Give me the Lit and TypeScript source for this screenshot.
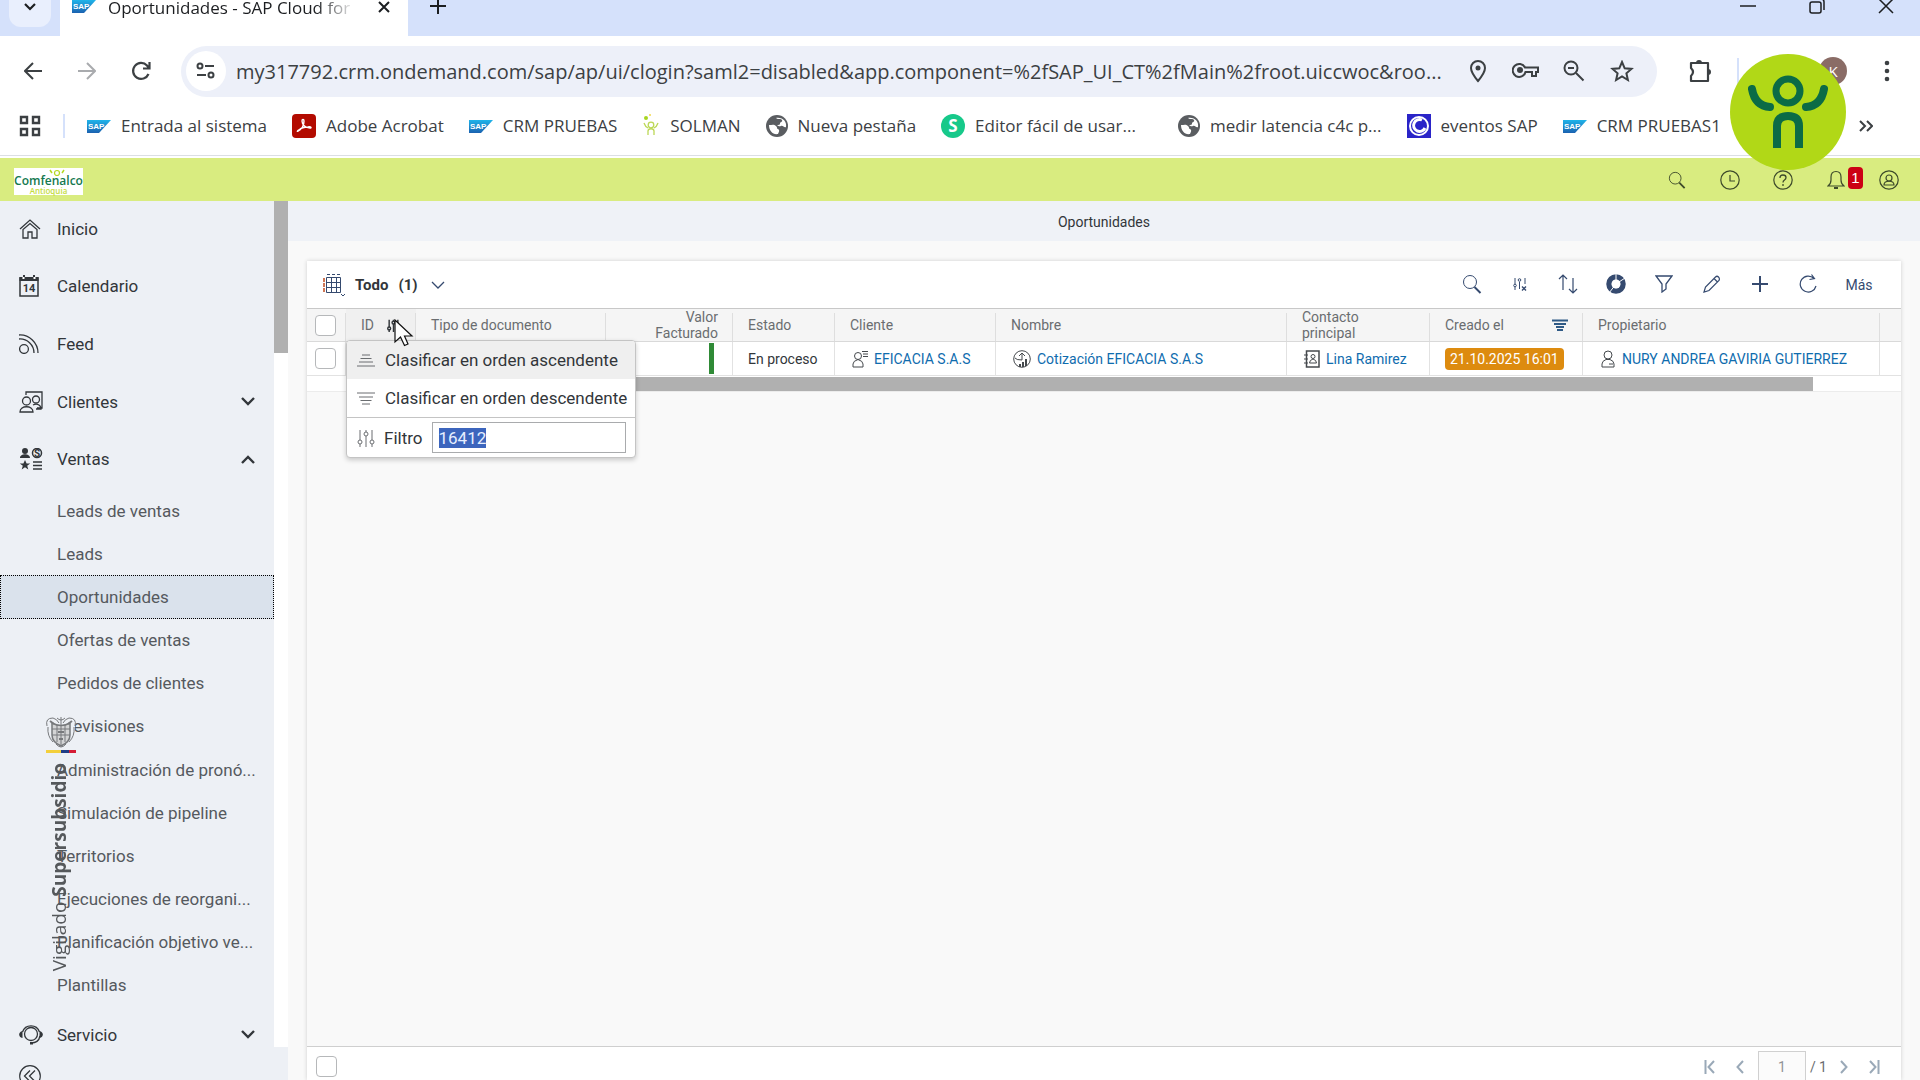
import { LitElement, html, css, svg, nothing } from "lit";
import { customElement } from "lit/decorators.js";
import { classMap } from "lit/directives/class-map.js";

const icon = (w: number, h: number, body: unknown, box = `0 0 ${w} ${h}`) =>
  html`<svg width=${w} height=${h} viewBox=${box} fill="none" stroke="currentColor" aria-hidden="true">${body}</svg>`;

const sapLogo = () =>
  icon(24, 13, svg`<defs><linearGradient id="sap" x1="0" y1="0" x2="0" y2="1"><stop offset="0" stop-color="#1fb4ea"/><stop offset="1" stop-color="#1b62b0"/></linearGradient></defs>
    <path d="M0 0H24L12 13H0Z" fill="url(#sap)" stroke="none"/>
    <text x="1" y="9" font-family="Liberation Sans" font-size="8" font-weight="700" fill="#fff" stroke="none">SAP</text>`);

const globe = () =>
  icon(22, 24, svg`<circle cx="11" cy="12" r="11" fill="#5a5d61" stroke="none"/>
    <path d="M3 11c3 0 5-1 7 1s0 2 2 3 1 3 0 5C7 21 3 17 3 11ZM10 4c2 2 5 0 6 2s-2 2-2 3 0 2-2 2 1 2 3 1 3 2 5 1c1-5-3-10-10-9Z" fill="#fff" stroke="none"/>`);

const bookmarkIcons = {
  sap: sapLogo,
  acrobat: () =>
    icon(24, 24, svg`<rect width="24" height="24" rx="4" fill="#b30b00" stroke="none"/>
      <path d="M6 17c4-2 6-6 6-10 0-2-2-2-2 0 0 4 4 7 8 7 2 0 1-2-2-1-4 0-7 1-9 3-2 1-2 2-1 1Z" stroke="#fff" stroke-width="1.4"/>`),
  solman: () =>
    icon(18, 24, svg`<g stroke="#bcd856" stroke-width="1.300"><circle cx="9" cy="11" r="2.800"/><path d="M2 9c1 3 2 4 4 5M16 9c-1 3-2 4-4 5M6 21v-4c0-3 6-3 6 0v4"/></g><circle cx="4" cy="4" r="2" fill="#a8d520" stroke="none"/><circle cx="8" cy="1" r="1" fill="#f3d84a" stroke="none"/>`),
  globe,
  editor: () =>
    icon(24, 24, svg`<circle cx="12" cy="12" r="12" fill="#17c98a" stroke="none"/>
      <text x="12" y="18" text-anchor="middle" font-family="Open Sans" font-size="17" font-weight="700" fill="#fff" stroke="none">S</text>`),
  eventos: () =>
    icon(24, 24, svg`<rect width="24" height="24" fill="#2a24c8" stroke="none"/>
      <circle cx="12" cy="12" r="9" stroke="#fff" stroke-width="2"/><path d="M15 6a6 6 0 1 0 3 8" stroke="#fff" stroke-width="3"/>`),
};

const bookmarks: { icon: keyof typeof bookmarkIcons; text: string; wide?: boolean }[] = [
  { icon: "sap", text: "Entrada al sistema" },
  { icon: "acrobat", text: "Adobe Acrobat" },
  { icon: "sap", text: "CRM PRUEBAS" },
  { icon: "solman", text: "SOLMAN" },
  { icon: "globe", text: "Nueva pestaña" },
  { icon: "editor", text: "Editor fácil de usar...", wide: true },
  { icon: "globe", text: "medir latencia c4c p..." },
  { icon: "eventos", text: "eventos SAP" },
  { icon: "sap", text: "CRM PRUEBAS1" },
];

const search = (s: number) =>
  icon(s, s, svg`<circle cx="8" cy="8" r="6.5"/><path d="M12.5 13l6 6" stroke-width="2"/>`, "0 0 20 20");

const sliders = (s: number, weight = 1) =>
  icon(s, s, svg`<g stroke-width=${weight}><path d="M3 1v10M3 15v3M9 1v2M9 7v11M15 1v10M15 15v3"/><circle cx="3" cy="13" r="2"/><circle cx="9" cy="5" r="2"/><circle cx="15" cy="13" r="2"/></g>`, "0 0 18 18");

const chevron = (up: boolean) =>
  icon(14, 9, svg`<path d=${up ? "M1 8L7 2L13 8" : "M1 1L7 7L13 1"} stroke-width="2.4"/>`);

const home = () => icon(22, 20, svg`<path d="M1 10L11 1L21 10M4 10.500V19H9V13H13V19H18V10.500L11 4.500Z" stroke-width="1.300"/>`);
const calendar = () =>
  icon(20, 22, svg`<path d="M1 3H19V21H1Z" stroke-width="1.500"/><path d="M0.500 2H19.500V6H0.500ZM4 0h2v3H4ZM14 0h2v3h-2Z" fill="currentColor" stroke="none"/><path d="M4.500 2v2M15.500 2v2" stroke="#fff" stroke-width="2"/>
    <text x="10" y="17" text-anchor="middle" font-family="Roboto" font-size="11" font-weight="700" fill="currentColor" stroke="none">14</text>`);
const feed = () => icon(20, 20, svg`<circle cx="5" cy="15" r="4.400" stroke-width="1.300"/><path d="M0 1a18 18 0 0 1 19 18M0 5a14 14 0 0 1 15 14" stroke-width="1.300"/>`);
const customers = () =>
  icon(24, 22, svg`<g stroke-width="1.300"><path d="M7 4V1H23V17H18M1 21c0-7 13-7 13 0ZM14 14c4-2 8 0 8 4h-5"/><circle cx="7.500" cy="10" r="4"/><circle cx="17" cy="8.500" r="3.500"/></g>`);
const sales = () =>
  icon(24, 22, svg`<g fill="currentColor" stroke="none"><circle cx="6" cy="3" r="3"/><path d="M1 10c0-5 10-5 10 0ZM6 12l1.600 3.400h3.600l-3 2.400 1.100 3.700L6 19.300l-3.300 2.200 1.100-3.700-3-2.400h3.600Z"/></g><circle cx="18" cy="5" r="4.500" stroke-width="1.500"/>
    <text x="18" y="8.500" text-anchor="middle" font-family="Roboto" font-size="10" font-weight="700" fill="currentColor" stroke="none">S</text><path d="M14 14h9M14 17.500h9M14 21h9" stroke-width="1.300"/>`);
const service = () =>
  icon(24, 20, svg`<circle cx="12" cy="9" r="6.500" stroke-width="1.300"/><path d="M3.500 7a9 9 0 0 1 17 0M12 18c4 0 8-2 9-7" stroke-width="1.300"/><path d="M3.500 6v7C-1 12-1 7 3.500 6ZM20.500 6v7c4.500-1 4.500-6 0-7ZM11 17h3v2.500h-3Z" fill="currentColor" stroke="none"/>`);
const collapse = () => icon(22, 22, svg`<circle cx="11" cy="11" r="10.300" stroke-width="1.200"/><path d="M11 5.500L5.500 11L11 16.500M16 5.500L10.500 11L16 16.500" stroke-width="1.300"/>`);

const modules = [
  { text: "Inicio", icon: home },
  { text: "Calendario", icon: calendar },
  { text: "Feed", icon: feed },
  { text: "Clientes", icon: customers, arrow: "down" },
  { text: "Ventas", icon: sales, arrow: "up" },
];

const salesPages = [
  "Leads de ventas", "Leads", "Oportunidades", "Ofertas de ventas", "Pedidos de clientes", "Previsiones",
  "Administración de pronó...", "Simulación de pipeline", "Territorios", "Ejecuciones de reorgani...",
  "Planificación objetivo ve...", "Plantillas",
];

const tools = [
  { label: "Buscar", icon: () => search(20) },
  {
    label: "Borrar filtros",
    icon: () => icon(14, 14, svg`<path d="M2 1v6M2 10v3M6.500 5v7M12 1v6"/><circle cx="2" cy="8.500" r="1.300"/><circle cx="6.500" cy="3" r="1.300"/><path d="M9 9.500l4 4M13 9.500l-4 4" stroke-width="1.400"/>`),
  },
  { label: "Clasificar", icon: () => icon(20, 20, svg`<path d="M5 16V1M1 5L5 1L9 5M15 4V19M11 15L15 19L19 15" stroke-width="1.200"/>`) },
  {
    label: "Gráfico",
    icon: () => icon(20, 20, svg`<circle cx="10" cy="10" r="7" stroke-width="5.500"/><path d="M10 10V-1M10 10L19 4M10 10L3 19" stroke="#fff" stroke-width="1"/><circle cx="10" cy="10" r="4.500" fill="#fff" stroke="none"/>`),
  },
  { label: "Filtrar", icon: () => icon(18, 18, svg`<path d="M1 1H17L11 9V14L7 17V9Z" stroke-width="1.300"/>`) },
  { label: "Editar", icon: () => icon(18, 18, svg`<path d="M1 17L2.500 12L12.500 2Q14 0.500 15.500 2T16 5.500L6 15.500ZM11 3.500L14.500 7" stroke-width="1.200"/>`) },
  { label: "Crear", icon: () => icon(18, 18, svg`<path d="M9 1V17M1 9H17" stroke-width="2"/>`) },
  { label: "Actualizar", icon: () => icon(18, 20, svg`<path d="M15 4.500A8 8 0 1 0 17 12M12.500 0.500L15.500 4.500L10.500 5.500" stroke-width="1.200"/>`) },
];

@customElement("app-browser-bar")
export class AppBrowserBar extends LitElement {
  static styles = css`
    :host { display: block; font-family: "Open Sans", "Noto Sans", sans-serif; color: #3c4043; }
    * { box-sizing: border-box; }
    svg { display: block; flex: none; }
    button { border: 0; padding: 0; margin: 0; background: none; color: inherit; font: inherit; display: flex; align-items: center; justify-content: center; }
    .strip { display: flex; align-items: flex-start; height: 36px; background: #d5e1fb; color: #1c1e21; }
    .tabs-menu { width: 42px; height: 27px; margin: 0 9px; background: #e9effd; border-radius: 0 0 12px 12px; padding-bottom: 14px; }
    .tab { width: 348px; height: 36px; background: #fff; display: flex; align-items: flex-start; gap: 12px; padding: 0 12px; }
    .title { width: 248px; height: 24px; line-height: 16px; font-size: 17px; white-space: nowrap; overflow-x: clip; -webkit-mask-image: linear-gradient(90deg, #000 84%, transparent); mask-image: linear-gradient(90deg, #000 84%, transparent); }
    .close { height: 14px; margin-left: auto; width: 24px; }
    .new { width: 60px; height: 14px; }
    .window { margin-left: auto; display: flex; }
    .window button { width: 69px; height: 14px; }
    .bar { display: flex; align-items: center; height: 70px; padding: 0 6px; background: #fff; }
    .nav { width: 54px; height: 48px; }
    .fwd { color: #a9abae; }
    .address { flex: 1; min-width: 0; height: 51px; margin-left: 13px; border-radius: 26px; background: #edf0f9; display: flex; align-items: center; padding: 0 11px 0 5px; }
    .site { width: 40px; height: 40px; border-radius: 50%; background: #fff; margin-right: 10px; }
    .url { flex: 1; min-width: 0; height: 40px; border: 0; padding: 0; background: none; outline: 0; font: inherit; font-size: 20px; color: #3c4043; }
    .tool { width: 48px; height: 40px; }
    .ext { width: 54px; margin-left: 16px; height: 40px; }
    .rule { width: 2px; height: 26px; background: #d5e1fb; margin: 0 80px 0 10px; }
    .avatar { width: 28px; height: 28px; border-radius: 50%; background: #8a6c66; color: #fff; font-size: 15px; }
    .more { width: 54px; height: 40px; margin-left: 13px; }
    .marks { display: flex; align-items: center; height: 50px; padding: 0 47px 9px 18px; background: #fff; border-bottom: 1px solid #dcdfe3; }
    .apps { width: 24px; height: 24px; }
    .marks .rule { height: 24px; margin: 0 22px 0 21px; }
    .mark { display: flex; align-items: center; gap: 10px; margin-right: 25px; font-size: 17px; line-height: 24px; color: #3c4043; text-decoration: none; white-space: nowrap; }
    .wide { margin-right: 42px; }
    .over { margin-left: auto; }
  `;

  render() {
    return html`
      <div class="strip">
        <button class="tabs-menu" aria-label="Buscar pestañas">${icon(12, 8, svg`<path d="M1 1L6 6L11 1" stroke-width="2.200"/>`)}</button>
        <div class="tab">
          <span>${sapLogo()}</span>
          <span class="title">Oportunidades - SAP Cloud for</span>
          <button class="close" aria-label="Cerrar pestaña">${icon(12, 12, svg`<path d="M1 1L11 11M11 1L1 11" stroke-width="2"/>`)}</button>
        </div>
        <button class="new" aria-label="Nueva pestaña">${icon(16, 14, svg`<path d="M8 -1V14M0 6H16" stroke-width="2"/>`)}</button>
        <div class="window">
          <button aria-label="Minimizar">${icon(16, 12, svg`<path d="M0 5H16" stroke-width="1.500"/>`)}</button>
          <button aria-label="Restaurar">${icon(16, 14, svg`<rect x="1" y="2" width="11" height="11" rx="2" stroke-width="1.500"/><path d="M4 -1H12Q15 -1 15 2V10" stroke-width="1.500"/>`)}</button>
          <button aria-label="Cerrar">${icon(16, 14, svg`<path d="M1 -1L15 13M15 -1L1 13" stroke-width="1.500"/>`)}</button>
        </div>
      </div>
      <div class="bar">
        <button class="nav" aria-label="Atrás">${icon(18, 18, svg`<path d="M9 1L1 9L9 17M1 9H18" stroke-width="2"/>`)}</button>
        <button class="nav fwd" aria-label="Adelante">${icon(18, 18, svg`<path d="M9 1L17 9L9 17M17 9H0" stroke-width="2"/>`)}</button>
        <button class="nav" aria-label="Recargar">${icon(20, 20, svg`<path d="M17.500 13A8 8 0 1 1 16 4.500L18 7M18.500 1V7.500H12" stroke-width="2.200"/>`)}</button>
        <div class="address">
          <button class="site" aria-label="Información del sitio">${icon(20, 18, svg`<g stroke-width="2"><circle cx="4" cy="4" r="2.500"/><path d="M9 4H18M1 13H10"/><circle cx="15" cy="13" r="2.500"/></g>`)}</button>
          <input class="url" aria-label="Dirección" readonly value="my317792.crm.ondemand.com/sap/ap/ui/clogin?saml2=disabled&app.component=%2fSAP_UI_CT%2fMain%2froot.uiccwoc&roo..." />
          <button class="tool" aria-label="Ubicación">${icon(18, 24, svg`<path d="M9 22C4 16 2 13 2 9a7 7 0 0 1 14 0c0 4-2 7-7 13Z" stroke-width="2"/><circle cx="9" cy="9" r="2.500" fill="currentColor" stroke="none"/>`)}</button>
          <button class="tool" aria-label="Contraseñas">${icon(28, 18, svg`<path d="M13 5.500H26V10H24V14H20V10H13.500A6.500 6.500 0 1 1 13 5.500Z" stroke-width="2"/><circle cx="8" cy="8" r="3" fill="currentColor" stroke="none"/>`)}</button>
          <button class="tool" aria-label="Zoom">${icon(22, 22, svg`<circle cx="8" cy="8" r="6.500" stroke-width="2"/><path d="M13 13L20.500 20.500M5 8H11" stroke-width="2"/>`)}</button>
          <button class="tool" aria-label="Marcador">${icon(24, 22, svg`<path d="M12 2L14.700 8.300L21.500 8.900L16.400 13.300L17.900 20L12 16.500L6.100 20L7.600 13.300L2.500 8.900L9.300 8.300Z" stroke-width="2"/>`)}</button>
        </div>
        <button class="ext" aria-label="Extensiones">${icon(24, 24, svg`<path d="M3 4H20V22H3V17Q7 13 3 9Z" stroke-width="2.200" stroke-linejoin="round"/><path d="M8 4a3 3 0 0 1 6 0ZM20 10a3 3 0 0 1 0 6Z" fill="currentColor" stroke="none"/>`)}</button>
        <span class="rule"></span>
        <button class="avatar" aria-label="Perfil">K</button>
        <button class="more" aria-label="Menú">${icon(6, 22, svg`<g fill="currentColor" stroke="none"><circle cx="3" cy="3" r="2.300"/><circle cx="3" cy="11" r="2.300"/><circle cx="3" cy="19" r="2.300"/></g>`)}</button>
      </div>
      <div class="marks">
        <button class="apps" aria-label="Aplicaciones">${icon(22, 22, svg`<path d="M2 2h6v6h-6ZM14 2h6v6h-6ZM2 14h6v6h-6ZM14 14h6v6h-6Z" stroke-width="2.400"/>`)}</button>
        <span class="rule"></span>
        ${bookmarks.map((b) => html`<a href="#" class=${classMap({ mark: true, wide: !!b.wide })}>${bookmarkIcons[b.icon]()}${b.text}</a>`)}
        <button class="over" aria-label="Más marcadores">${icon(14, 12, svg`<path d="M1 1L6 6L1 11M8 1L13 6L8 11" stroke-width="2"/>`)}</button>
      </div>
    `;
  }
}

@customElement("app-shell-header")
export class AppShellHeader extends LitElement {
  static styles = css`
    :host { display: flex; align-items: center; height: 43px; margin-top: 2px; padding: 0 5px 0 14px; background: #d9ec80; color: #3d4a2a; font-family: Roboto, sans-serif; }
    svg { display: block; }
    .brand { width: 69px; height: 27px; margin-top: 3px; background: #fff; display: flex; flex-direction: column; align-items: center; justify-content: flex-end; position: relative; }
    .name { font: 600 12px/12px "Open Sans", sans-serif; color: #14794f; }
    .place { font: 600 8px/8px "Open Sans", sans-serif; color: #c3dc3c; }
    .sun { position: absolute; right: 18px; top: 1px; color: #b4d820; }
    .actions { margin-left: auto; display: flex; }
    button { width: 53px; height: 40px; border: 0; padding: 0; background: none; color: inherit; display: flex; align-items: center; justify-content: center; position: relative; }
    .badge { position: absolute; left: 39px; top: 7px; width: 15px; height: 22px; border-radius: 4px; background: #cc0014; color: #fff; font-size: 15px; line-height: 22px; text-align: center; }
  `;

  render() {
    return html`
      <div class="brand">
        <span class="sun">${icon(16, 7, svg`<circle cx="8" cy="4" r="2.500" stroke-width="1.200"/><path d="M1 1L3 4M15 1L13 4" stroke-width="1.500"/>`)}</span>
        <span class="name">Comfenalco</span><span class="place">Antioquia</span>
      </div>
      <div class="actions">
        <button aria-label="Buscar">${search(18)}</button>
        <button aria-label="Recientes">${icon(20, 20, svg`<circle cx="10" cy="10" r="9.200" stroke-width="1.200"/><path d="M10 5V11H15" stroke-width="1.200"/>`)}</button>
        <button aria-label="Ayuda">${icon(20, 20, svg`<circle cx="10" cy="10" r="9.200" stroke-width="1.200"/><path d="M7 8q0-3 3-3t3 2.500q0 1.500-1.500 2.500t-1.500 2.500M10 14v2" stroke-width="1.300"/>`)}</button>
        <button aria-label="Notificaciones">${icon(18, 20, svg`<path d="M1 16Q4 14 4 10V7Q4 1.500 9 1.500T14 7V10Q14 14 17 16Z" stroke-width="1.200"/><path d="M7 17h4v2H7Z" fill="currentColor" stroke="none"/>`)}<span class="badge">1</span></button>
        <button aria-label="Usuario">${icon(20, 20, svg`<circle cx="10" cy="10" r="9.200" stroke-width="1.200"/><circle cx="10" cy="8" r="3" stroke-width="1.200"/><path d="M5 15c0-5 10-5 10 0Z" stroke-width="1.200"/>`)}</button>
      </div>
    `;
  }
}

@customElement("app-sidebar")
export class AppSidebar extends LitElement {
  static styles = css`
    :host { display: grid; grid-template: minmax(0, 1fr) 33px / 274px 14px; min-height: 0; overflow: hidden; background: #edf0f5; color: #32363a; font: 17px/24px Roboto, sans-serif; position: relative; }
    * { box-sizing: border-box; }
    svg { display: block; }
    nav { min-height: 0; overflow: hidden; }
    ul { list-style: none; margin: 0; padding: 0; display: grid; grid-auto-rows: minmax(0, 1fr); }
    .modules { height: 288px; }
    .pages { height: 518px; }
    .last { height: 57px; }
    .entry { display: flex; align-items: center; height: 100%; padding: 0 19px 2px; color: inherit; text-decoration: none; white-space: nowrap; }
    .glyph { width: 38px; }
    .arrow { margin-left: auto; }
    .sub { padding: 0 0 0 57px; color: #55595e; }
    .current { background: #dae2ec; outline: 1px dotted #000; outline-offset: -1px; }
    .track { background: #fff; }
    .thumb { height: 152px; background: #b0b0b0; }
    .fold { grid-column: 1 / 3; border: 0; background: none; padding: 18px 0 0 19px; text-align: left; color: inherit; overflow: hidden; }
  `;

  render() {
    return html`
      <nav aria-label="Módulos">
        <ul class="modules">
          ${modules.map((m) => html`<li><a class="entry" href="#"><span class="glyph">${m.icon()}</span>${m.text}${m.arrow ? html`<span class="arrow">${chevron(m.arrow === "up")}</span>` : nothing}</a></li>`)}
        </ul>
        <ul class="pages">
          ${salesPages.map((p) => html`<li><a href="#" class=${classMap({ entry: true, sub: true, current: p === "Oportunidades" })}>${p}</a></li>`)}
        </ul>
        <ul class="last">
          <li><a class="entry" href="#"><span class="glyph">${service()}</span>Servicio<span class="arrow">${chevron(false)}</span></a></li>
        </ul>
      </nav>
      <div class="track"><div class="thumb"></div></div>
      <button class="fold" aria-label="Contraer menú">${collapse()}</button>
    `;
  }
}

@customElement("app-worklist")
export class AppWorklist extends LitElement {
  static styles = css`
    :host { display: flex; flex-direction: column; min-width: 0; min-height: 0; background: #f9f9f9; font: 14px/16px Roboto, sans-serif; color: #32363a; }
    * { box-sizing: border-box; }
    svg { display: block; flex: none; }
    button { border: 0; padding: 0; background: none; color: inherit; font: inherit; display: flex; align-items: center; justify-content: center; }
    h1 { margin: 0; height: 40px; font: inherit; line-height: 42px; text-align: center; background: #eff2f7; flex: none; }
    .card { flex: 1; min-height: 0; margin: 20px 19px 0; display: flex; flex-direction: column; box-shadow: 0 0 4px #cfcfcf; }
    .toolbar { height: 47px; flex: none; background: #fff; display: flex; align-items: center; padding: 0 15px; color: #354a6f; }
    .view { width: 24px; height: 26px; margin-right: 9px; }
    h2 { margin: 0; font-size: 15px; line-height: 20px; color: #32363a; display: flex; gap: 10px; }
    .pick { width: 40px; height: 24px; }
    .tools { margin-left: auto; display: flex; }
    .tools button { width: 48px; height: 36px; }
    .tools svg { margin-bottom: 2px; }
    .tools .more { width: 54px; }
    table { width: 100%; table-layout: fixed; border-collapse: separate; border-spacing: 0; }
    th { height: 33px; padding: 0 15px; border-top: 1px solid #c8c8c8; border-bottom: 1px solid #d9d9d9; background: #f5f5f5; font-weight: 400; line-height: 16px; text-align: left; color: #6a6d70; background-image: linear-gradient(#dedede, #dedede); background-size: 1px 28px; background-repeat: no-repeat; background-position: right bottom; }
    td { height: 34px; padding: 0 15px; background: #fff; border-right: 1px solid #e2e2e2; border-bottom: 1px solid #e2e2e2; white-space: nowrap; }
    th:last-child, td:last-child { border-right: 0; background-image: none; padding: 0; }
    .check { width: 39px; padding: 0 0 0 8px; }
    .c-id { width: 70px; position: relative; background-color: #f0f0f0; padding-right: 0; }
    .c-type { width: 190px; }
    .c-value { width: 127px; text-align: right; }
    .c-state { width: 102px; }
    .c-client { width: 161px; }
    .c-contact { width: 143px; }
    .c-date { width: 153px; }
    .c-owner { width: 297px; }
    .c-end { width: 21px; }
    .head { display: flex; align-items: center; justify-content: space-between; }
    .c-id .head { justify-content: flex-start; gap: 13px; }
    .c-id .head svg { color: #32363a; }
    .c-date .head { color: #2f5a86; }
    .c-date .head span { color: #6a6d70; }
    input[type="checkbox"] { appearance: none; display: block; width: 21px; height: 21px; margin: 0; border: 1px solid #b6b8ba; border-radius: 4px; background: #fff; }
    .value-bar { display: block; width: 5px; height: 31px; margin-left: auto; background: #2f8a36; }
    td.c-value { padding-right: 18px; }
    .link { display: flex; align-items: center; gap: 6px; color: #0f6cae; text-decoration: none; }
    .link svg { color: #45494d; }
    td .link { margin-left: 2px; }
    .date { display: inline-block; padding: 0 5px; line-height: 22px; border-radius: 4px; background: #dd8b0f; color: #fff; }
    td.c-date { padding-right: 0; }
    .hscroll { height: 16px; padding: 1px 88px 0 40px; background: #fff; border-bottom: 1px solid #ececec; flex: none; }
    .hthumb { height: 14px; background: #b0b0b0; }
    .blank { flex: 1; min-height: 0; }
    .pager { height: 34px; flex: none; background: #fff; border-top: 1px solid #cfcfcf; display: flex; align-items: flex-start; padding: 4px 12px 0 9px; overflow: hidden; color: #9aa9b8; }
    .pager input[type="checkbox"] { margin-top: 5px; }
    .pages { margin-left: auto; display: flex; align-items: center; height: 32px; }
    .pages button { width: 30px; height: 32px; }
    .page { width: 48px; height: 32px; margin: 0 4px 0 3px; padding: 0; border: 1px solid #d0d0d0; background: #fbfbfb; color: #919497; font: inherit; text-align: center; }
    .total { color: #6a6d70; margin-right: 2px; }
    .menu { position: absolute; z-index: 2; left: 0; top: 31px; width: 290px; background: #fff; border: 1px solid #c4c4c4; border-radius: 4px; box-shadow: 0 2px 5px #0003; font-size: 17px; line-height: 20px; color: #32363a; overflow: hidden; white-space: nowrap; }
    .menu button, .filter { width: 100%; height: 38px; padding: 0 10px; justify-content: flex-start; gap: 10px; display: flex; align-items: center; }
    .menu svg { color: #6a6d70; }
    .menu .hover { background: #efefef; }
    .filter { height: 40px; border-top: 1px solid #c4c4c4; padding-right: 9px; gap: 9px; }
    .filter input { flex: 1; min-width: 0; height: 31px; border: 1px solid #a9abad; padding: 0 6px; font: inherit; color: inherit; outline: 0; caret-color: transparent; }
    .filter input::selection { background: #3c65bd; color: #e6efff; }
    .pointer { position: absolute; z-index: 3; left: 48px; top: 10px; }
  `;

  firstUpdated() {
    const field = this.renderRoot.querySelector<HTMLInputElement>("#filter");
    field?.focus();
    field?.select();
  }

  render() {
    return html`
      <h1>Oportunidades</h1>
      <section class="card">
        <div class="toolbar">
          <button class="view" aria-label="Vista">${icon(24, 24, svg`<path d="M4.500 4.500H18.500V19.500H4.500ZM9.500 4.500V19.500M14.500 4.500V19.500M4.500 9.500H18.500M4.500 14.500H18.500" stroke-width="1"/><path d="M5 1.500H18" stroke-dasharray="3 2"/><path d="M2 5V19" stroke="#cf7655" stroke-width="2" stroke-dasharray="4 1"/><path d="M19 21L21 23L23 21"/>`)}</button>
          <h2><span>Todo</span><span>(1)</span></h2>
          <button class="pick" aria-label="Cambiar vista">${icon(14, 8, svg`<path d="M1 1L7 7L13 1" stroke-width="1.300"/>`)}</button>
          <div class="tools">
            ${tools.map((t) => html`<button aria-label=${t.label}>${t.icon()}</button>`)}
            <button class="more">Más</button>
          </div>
        </div>
        <table>
          <thead>
            <tr>
              <th class="check"><input type="checkbox" aria-label="Seleccionar todo" /></th>
              <th class="c-id">
                <div class="head">ID ${sliders(13, 2)}</div>
                <div class="menu">
                  <button class="hover">${icon(18, 13, svg`<path d="M5 1H13M3.500 4.500H14.500M2 8H16M0 12H18"/>`)}Clasificar en orden ascendente</button>
                  <button>${icon(18, 13, svg`<path d="M0 1H18M2 5H16M3.500 8.500H14.500M5 12H13"/>`)}Clasificar en orden descendente</button>
                  <div class="filter">${sliders(18)}<label for="filter">Filtro</label><input id="filter" type="text" value="16412" /></div>
                </div>
                <span class="pointer">${icon(20, 28, svg`<path d="M1 1V23L6.500 18L10.500 26.500L14 25L10.500 17H18Z" fill="#fff" stroke="#111" stroke-width="1.200"/>`)}</span>
              </th>
              <th class="c-type">Tipo de documento</th>
              <th class="c-value">Valor Facturado</th>
              <th class="c-state">Estado</th>
              <th class="c-client">Cliente</th>
              <th>Nombre</th>
              <th class="c-contact">Contacto principal</th>
              <th class="c-date"><div class="head"><span>Creado el</span>${icon(16, 12, svg`<path d="M0 1.500H16M2 5H14M4 8H12M5 11H11" stroke-width="1.800"/>`)}</div></th>
              <th class="c-owner">Propietario</th>
              <th class="c-end"></th>
            </tr>
          </thead>
          <tbody>
            <tr>
              <td class="check"><input type="checkbox" aria-label="Seleccionar fila" /></td>
              <td></td>
              <td></td>
              <td class="c-value"><span class="value-bar"></span></td>
              <td>En proceso</td>
              <td><a class="link" href="#">${icon(16, 18, svg`<circle cx="6" cy="6" r="3.500"/><path d="M1 17v-3q0-3 5-4.500 5 1.500 5 4.500v3ZM10 1.500H16M11 4H16M11 6.500H16"/>`)}EFICACIA S.A.S</a></td>
              <td><a class="link" href="#">${icon(18, 18, svg`<circle cx="9" cy="9" r="8.300"/><path d="M9 10V3M6 6L9 3L12 6M9 10Q3 10 2 8"/><path d="M7 17v-3M10 17v-5M13 16v-7" stroke-width="2"/>`)}Cotización EFICACIA S.A.S</a></td>
              <td><a class="link" href="#">${icon(16, 18, svg`<path d="M2.500 1H15V17H2.500Z" stroke-width="1.500"/><path d="M0 5H4M0 9H4M0 13H4"/><circle cx="9" cy="6.500" r="2"/><path d="M5.500 13q0-3 3.500-4 3.500 1 3.500 4Z"/>`)}Lina Ramirez</a></td>
              <td class="c-date"><span class="date">21.10.2025 16:01</span></td>
              <td><a class="link" href="#">${icon(16, 18, svg`<circle cx="8" cy="5" r="4"/><path d="M2 17v-3q0-3 4-4.500h4q4 1.500 4 4.500v3ZM9 14h4"/>`)}NURY ANDREA GAVIRIA GUTIERREZ</a></td>
              <td></td>
            </tr>
          </tbody>
        </table>
        <div class="hscroll"><div class="hthumb"></div></div>
        <div class="blank"></div>
        <div class="pager">
          <input type="checkbox" aria-label="Selección múltiple" />
          <div class="pages">
            <button aria-label="Primera página">${icon(12, 14, svg`<path d="M1.500 0V14M10 1L4.500 7L10 13" stroke-width="2"/>`)}</button>
            <button aria-label="Página anterior">${icon(8, 14, svg`<path d="M7 1L1.500 7L7 13" stroke-width="2"/>`)}</button>
            <input class="page" aria-label="Página" value="1" />
            <span class="total">/ 1</span>
            <button aria-label="Página siguiente">${icon(8, 14, svg`<path d="M1 1L6.500 7L1 13" stroke-width="2"/>`)}</button>
            <button aria-label="Última página">${icon(12, 14, svg`<path d="M10.500 0V14M2 1L7.500 7L2 13" stroke-width="2"/>`)}</button>
          </div>
        </div>
      </section>
    `;
  }
}

@customElement("app-root")
export class AppRoot extends LitElement {
  static styles = css`
    :host { display: flex; flex-direction: column; height: 100vh; overflow: hidden; position: relative; background: #fff; }
    .body { flex: 1; min-height: 0; display: grid; grid-template-columns: auto minmax(0, 1fr); grid-template-rows: minmax(0, 1fr); }
    svg { display: block; }
    .mascot { position: absolute; right: 74px; top: 54px; }
    .seal { position: absolute; left: 45px; top: 716px; display: flex; flex-direction: column; gap: 10px; }
    .seal p { margin: 0; align-self: flex-start; writing-mode: vertical-rl; transform: rotate(180deg); font: 19px/28px "Open Sans", sans-serif; color: #55585b; }
    .seal b { font-weight: 700; }
  `;

  render() {
    return html`
      <app-browser-bar></app-browser-bar>
      <app-shell-header></app-shell-header>
      <div class="body">
        <app-sidebar></app-sidebar>
        <app-worklist></app-worklist>
      </div>
      <div class="mascot">
        ${icon(116, 116, svg`<circle cx="58" cy="58" r="58" fill="#b1d817" stroke="none"/>
          <g stroke="#0b6b46" stroke-width="7"><circle cx="58" cy="37" r="12"/><path d="M22 35Q25 52 40 53M94 35Q91 52 76 53" stroke-width="8" stroke-linecap="round"/><path d="M47 94V72Q47 62 58 62T69 72V94" stroke-width="8"/></g>`)}
      </div>
      <div class="seal">
        ${icon(32, 37, svg`<rect x="4" y="0" width="26" height="33" fill="#edf0f5" stroke="none"/>
          <g stroke="#77797c"><path d="M7 7Q16 12 25 7V19Q25 26 16 30Q7 26 7 19Z" fill="#d3d4d5" stroke-width="1.500"/><path d="M7 13H25M7 19H25M12 9V26M20 9V26M16 9V29"/><path d="M2 10Q0 2 8 2Q12 3 14 7M30 10Q32 2 24 2Q20 3 18 7M3 11Q2 20 8 26M29 11Q30 20 24 26M16 1V9M12 2Q16 6 20 2M11 28Q16 34 21 28"/><path d="M5 5L9 8M27 5L23 8M14 23h4M13 16h6" stroke-width="2"/></g>
          <path d="M1 35.500H16" stroke="#f3cf3b" stroke-width="3"/><path d="M16 35.500H24" stroke="#203e87" stroke-width="3"/><path d="M24 35.500H31" stroke="#d51c35" stroke-width="3"/>`)}
        <p>Vigilado <b>Supersubsidio</b></p>
      </div>
    `;
  }
}
